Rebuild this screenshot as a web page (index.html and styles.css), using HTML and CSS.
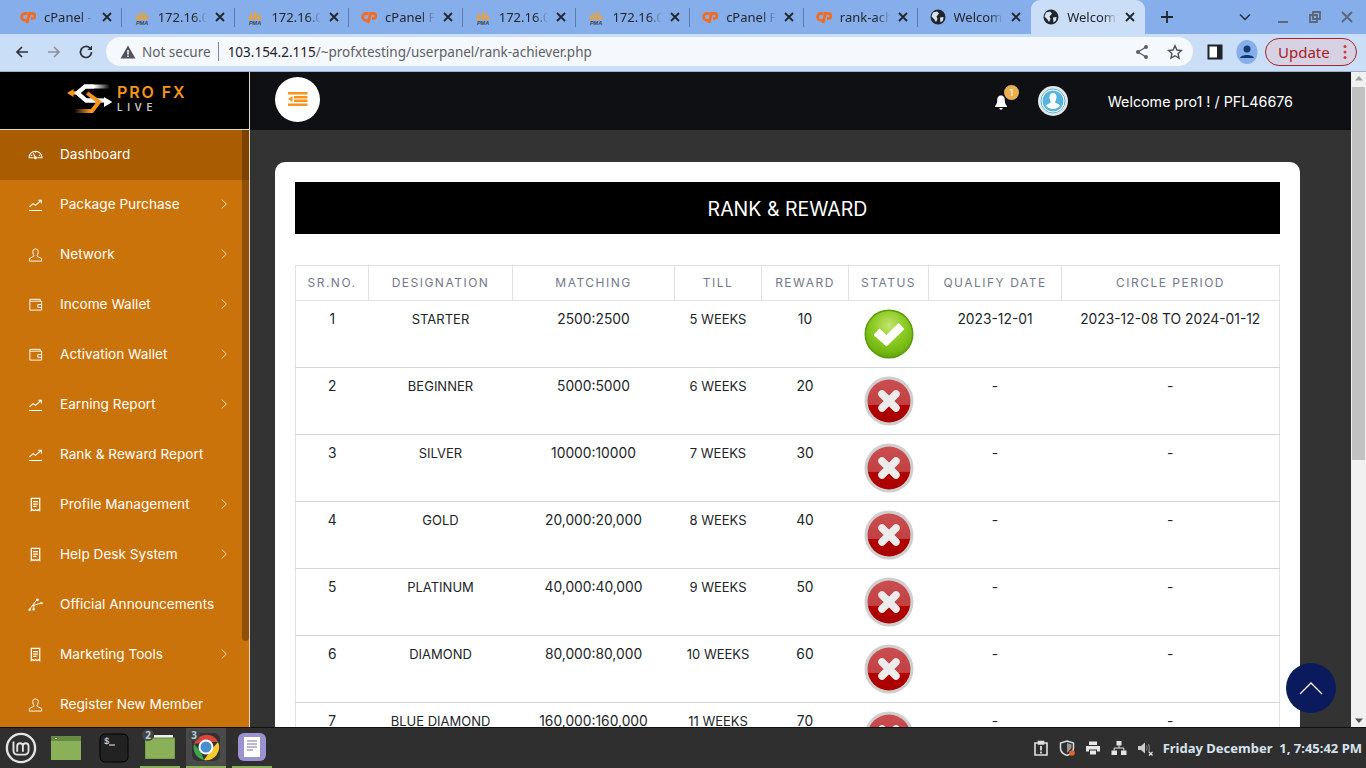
FILE: index.html
```html
<!DOCTYPE html>
<html lang="en">
<head>
<meta charset="utf-8">
<title>Rank &amp; Reward</title>
<link rel="stylesheet" href="styles.css">
</head>
<body>
<svg class="defs" width="0" height="0" aria-hidden="true">
  <defs>
    <radialGradient id="gGreen" cx="50%" cy="32%" r="68%"><stop offset="0" stop-color="#c4e56e"/><stop offset=".5" stop-color="#8ccb24"/><stop offset=".85" stop-color="#74b812"/><stop offset="1" stop-color="#62a80c"/></radialGradient>
    <linearGradient id="gRed" x1="0" y1="0" x2="0" y2="1"><stop offset="0" stop-color="#ca4e50"/><stop offset=".58" stop-color="#c24143"/><stop offset=".6" stop-color="#b30000"/><stop offset="1" stop-color="#a80000"/></linearGradient>
    <linearGradient id="fadeW" gradientUnits="userSpaceOnUse" x1="44" y1="0" x2="28" y2="0"><stop offset="0" stop-color="#fff" stop-opacity="0"/><stop offset="1" stop-color="#fff"/></linearGradient>
    <linearGradient id="fadeO" gradientUnits="userSpaceOnUse" x1="8" y1="0" x2="24" y2="0"><stop offset="0" stop-color="#f7941d" stop-opacity="0"/><stop offset="1" stop-color="#f7941d"/></linearGradient>
    <symbol id="ok" viewBox="0 0 50 50">
      <circle cx="25" cy="25" r="24.500" fill="#5b9a0c"/>
      <circle cx="25" cy="25" r="23" fill="url(#gGreen)"/>
      <path d="M10.500 26 L15.500 20.500 L22.500 27 L34.500 15 L39.500 20 L22.500 36.500 Z" fill="#fff" stroke="#fff" stroke-width="1.500" stroke-linejoin="round"/>
    </symbol>
    <symbol id="no" viewBox="0 0 50 50">
      <circle cx="25" cy="25" r="24.500" fill="#cfcfcf"/>
      <circle cx="25" cy="25" r="21.500" fill="url(#gRed)"/>
      <path d="M18 18 L32 32 M32 18 L18 32" stroke="#ececec" stroke-width="7.500" stroke-linecap="round"/>
    </symbol>
    <symbol id="cp" viewBox="0 0 16 16">
      <path d="M7.500 4.500H5a3.400 3.400 0 0 0 0 6.800H7M7 14 9.500 4.500h3a2.500 2.500 0 0 1 0 5H11" fill="none" stroke="#f26b21" stroke-width="2.800"/>
    </symbol>
    <symbol id="pma" viewBox="0 0 16 16">
      <path d="M1 10.500 5 3 5.500 10.500ZM6 10.500 8.500 0.500 10 10.500ZM10.500 10.500 10.500 3 15 10.500Z" fill="#f0a030"/>
      <text x="8" y="15.500" class="pma-t" text-anchor="middle">PMA</text>
    </symbol>
    <symbol id="globe" viewBox="0 0 16 16">
      <circle cx="8" cy="8" r="7.500" fill="#22262c"/>
      <path d="M3 3.500 7 2.500 9 4.500 6.500 7.500 7.500 10 6 13 4 10 1.500 7.500ZM10 8.500 13.500 8 13 11.500 10.500 13.500Z" fill="#d6e4f8"/>
    </symbol>
    <symbol id="tabx" viewBox="0 0 10 10"><path d="M1 1 9 9M9 1 1 9" stroke="#22262c" stroke-width="1.800"/></symbol>
    <symbol id="chev" viewBox="0 0 6 10"><path d="M.7 .5 5.300 5 .7 9.500" fill="none" stroke="#f2d9b4" stroke-width="1"/></symbol>
    <symbol id="i-gauge" viewBox="0 0 16 16"><path d="M1 11.500a7 7 0 0 1 14 0H10M6 11.500H1M8 11.500 5.500 6.500M3 8.500 4.500 9.500M13 8.500 11.500 9.500M8 4.500V6" fill="none" stroke="#fff" stroke-width="1.100"/><circle cx="8" cy="11.500" r="1.600" fill="#fff"/></symbol>
    <symbol id="i-chart" viewBox="0 0 16 16"><path d="M1 14.500H15M1.500 10.500 5.500 7 8 9 13.500 4M11 3.500H14.300V6.800" fill="none" stroke="#fff" stroke-width="1.100"/></symbol>
    <symbol id="i-user" viewBox="0 0 16 16"><path d="M5 5a3 3 0 1 1 6 0c0 2-1 3.500-1.500 4.500 0 1 3.500 1.500 5 3v2.500H1.500V12.500c1.500-1.500 5-2 5-3C6 8.500 5 7 5 5Z" fill="none" stroke="#fff" stroke-width="1"/></symbol>
    <symbol id="i-wallet" viewBox="0 0 16 16"><path d="M2 4.500V14H14.500V4.500H2V2.500H13V4.500M14.500 8H10.500V11H14.500" fill="none" stroke="#fff" stroke-width="1"/></symbol>
    <symbol id="i-doc" viewBox="0 0 16 16"><path d="M3.500 1.500H12.500V14.500L11 13.500 9.500 14.500 8 13.500 6.500 14.500 5 13.500 3.500 14.500ZM5.500 5H10.500M5.500 7.500H10.500M5.500 10H9" fill="none" stroke="#fff" stroke-width="1.300"/></symbol>
    <symbol id="i-vec" viewBox="0 0 16 16"><path d="M1.500 13.500 9 3.500M4 9.500 14 6.500M6.500 8 6 12" fill="none" stroke="#fff" stroke-width="1"/><circle cx="10" cy="3" r="1.500" fill="#fff"/><circle cx="14.500" cy="6.500" r="1.300" fill="#fff"/><circle cx="6" cy="13" r="1.300" fill="#fff"/><circle cx="1.800" cy="13.500" r="1.300" fill="#fff"/></symbol>
  </defs>
</svg>

<div class="tabstrip">
  <div class="tab"><svg class="fav"><use href="#cp"/></svg><span class="tab-title">cPanel - Tools</span><svg class="tab-x"><use href="#tabx"/></svg></div>
  <div class="tab"><svg class="fav"><use href="#pma"/></svg><span class="tab-title">172.16.0.10</span><svg class="tab-x"><use href="#tabx"/></svg></div>
  <div class="tab"><svg class="fav"><use href="#pma"/></svg><span class="tab-title">172.16.0.10</span><svg class="tab-x"><use href="#tabx"/></svg></div>
  <div class="tab"><svg class="fav"><use href="#cp"/></svg><span class="tab-title">cPanel File</span><svg class="tab-x"><use href="#tabx"/></svg></div>
  <div class="tab"><svg class="fav"><use href="#pma"/></svg><span class="tab-title">172.16.0.10</span><svg class="tab-x"><use href="#tabx"/></svg></div>
  <div class="tab"><svg class="fav"><use href="#pma"/></svg><span class="tab-title">172.16.0.10</span><svg class="tab-x"><use href="#tabx"/></svg></div>
  <div class="tab"><svg class="fav"><use href="#cp"/></svg><span class="tab-title">cPanel File</span><svg class="tab-x"><use href="#tabx"/></svg></div>
  <div class="tab"><svg class="fav"><use href="#cp"/></svg><span class="tab-title">rank-achiever</span><svg class="tab-x"><use href="#tabx"/></svg></div>
  <div class="tab tab-last"><svg class="fav"><use href="#globe"/></svg><span class="tab-title">Welcome</span><svg class="tab-x"><use href="#tabx"/></svg></div>
  <div class="tab tab-active"><svg class="fav"><use href="#globe"/></svg><span class="tab-title">Welcome</span><svg class="tab-x"><use href="#tabx"/></svg></div>
  <svg class="newtab" viewBox="0 0 14 14"><path d="M7 1V13M1 7H13" stroke="#22262c" stroke-width="1.800"/></svg>
  <div class="winctl">
    <svg class="wc wc-first" viewBox="0 0 14 14"><path d="M2 4.500 7 9.500 12 4.500" fill="none" stroke="#22303f" stroke-width="1.500"/></svg>
    <svg class="wc" viewBox="0 0 14 14"><path d="M2 12H12" stroke="#5b6878" stroke-width="2"/></svg>
    <svg class="wc" viewBox="0 0 14 14"><path d="M5 2H12V9H5ZM2 5H9V12H2Z" fill="none" stroke="#5b6878" stroke-width="1.800"/></svg>
    <svg class="wc" viewBox="0 0 14 14"><path d="M2 2 12 12M12 2 2 12" stroke="#5b6878" stroke-width="1.800"/></svg>
  </div>
</div>

<div class="toolbar">
  <svg class="nav-ic" viewBox="0 0 16 16"><path d="M14 8H3M8 3 3 8 8 13" fill="none" stroke="#2c3036" stroke-width="1.700"/></svg>
  <svg class="nav-ic" viewBox="0 0 16 16"><path d="M2 8H13M8 3 13 8 8 13" fill="none" stroke="#8a919b" stroke-width="1.700"/></svg>
  <svg class="nav-ic" viewBox="0 0 16 16"><path d="M13.500 8a5.500 5.500 0 1 1-1.600-3.900" fill="none" stroke="#2c3036" stroke-width="1.700"/><path d="M14 1.500V6H9.500Z" fill="#2c3036"/></svg>
  <div class="omnibox">
    <svg class="warn" viewBox="0 0 16 16"><path d="M8 1.500 15.500 14.500H.5Z" fill="#50555c"/><path d="M8 6V10.500M8 11.500V13" stroke="#f5f8fd" stroke-width="1.500"/></svg>
    <span class="ns">Not secure</span>
    <span class="omni-sep"></span>
    <span class="url"><span class="host">103.154.2.115</span>/~profxtesting/userpanel/rank-achiever.php</span>
    <svg class="omni-ic omni-share" viewBox="0 0 16 16"><path d="M12 3 4 8 12 13" fill="none" stroke="#5b6068" stroke-width="1.300"/><circle cx="12" cy="3" r="2" fill="#5b6068"/><circle cx="4" cy="8" r="2" fill="#5b6068"/><circle cx="12" cy="13" r="2" fill="#5b6068"/></svg>
    <svg class="omni-ic" viewBox="0 0 16 16"><path d="M8 1.800 9.900 6 14.500 6.500 11.100 9.500 12 14 8 11.700 4 14 4.900 9.500 1.500 6.500 6.100 6Z" fill="none" stroke="#4d5259" stroke-width="1.400"/></svg>
  </div>
  <svg class="side-ic" viewBox="0 0 16 16"><path d="M1.500 1.500H14.500V14.500H1.500Z" fill="#fff" stroke="#1f232a" stroke-width="2"/><path d="M10 1.500H14.500V14.500H10Z" fill="#1f232a"/></svg>
  <svg class="prof" viewBox="0 0 22 24"><ellipse cx="11" cy="12" rx="10.500" ry="12" fill="#85aeea"/><circle cx="11" cy="9" r="3.500" fill="#123a70"/><path d="M4 18c1-4 13-4 14 0Z" fill="#123a70"/></svg>
  <div class="update"><span>Update</span><svg class="kebab" viewBox="0 0 4 16"><circle cx="2" cy="2.500" r="1.500" fill="#d63a32"/><circle cx="2" cy="8" r="1.500" fill="#d63a32"/><circle cx="2" cy="13.500" r="1.500" fill="#d63a32"/></svg></div>
</div>

<div class="viewport">
  <aside class="sidebar">
    <div class="brand">
      <svg class="brand-mark" viewBox="0 0 46 30">
        <path d="M1 9 7.500 5V13Z" fill="#f7941d"/>
        <path d="M6 9H15" stroke="#f7941d" stroke-width="3.500"/>
        <path d="M44 2.500H19L11.500 9 20 16.500H38" fill="none" stroke="url(#fadeW)" stroke-width="4"/>
        <path d="M28 2.500H19L11.500 9 20 16.500H38" fill="none" stroke="#fff" stroke-width="4"/>
        <path d="M38 13 46.500 18 38 23Z" fill="#fff"/>
        <path d="M21 9 33 18 26 27H8" fill="none" stroke="url(#fadeO)" stroke-width="4"/>
      </svg>
      <div class="brand-text"><div class="brand-name">PRO FX</div><div class="brand-sub">LIVE</div></div>
    </div>
    <nav class="menu">
      <a class="item active"><svg class="mi"><use href="#i-gauge"/></svg><span class="label">Dashboard</span></a>
      <a class="item"><svg class="mi"><use href="#i-chart"/></svg><span class="label">Package Purchase</span><svg class="chev"><use href="#chev"/></svg></a>
      <a class="item"><svg class="mi"><use href="#i-user"/></svg><span class="label">Network</span><svg class="chev"><use href="#chev"/></svg></a>
      <a class="item"><svg class="mi"><use href="#i-wallet"/></svg><span class="label">Income Wallet</span><svg class="chev"><use href="#chev"/></svg></a>
      <a class="item"><svg class="mi"><use href="#i-wallet"/></svg><span class="label">Activation Wallet</span><svg class="chev"><use href="#chev"/></svg></a>
      <a class="item"><svg class="mi"><use href="#i-chart"/></svg><span class="label">Earning Report</span><svg class="chev"><use href="#chev"/></svg></a>
      <a class="item"><svg class="mi"><use href="#i-chart"/></svg><span class="label">Rank &amp; Reward Report</span></a>
      <a class="item"><svg class="mi"><use href="#i-doc"/></svg><span class="label">Profile Management</span><svg class="chev"><use href="#chev"/></svg></a>
      <a class="item"><svg class="mi"><use href="#i-doc"/></svg><span class="label">Help Desk System</span><svg class="chev"><use href="#chev"/></svg></a>
      <a class="item"><svg class="mi"><use href="#i-vec"/></svg><span class="label">Official Announcements</span></a>
      <a class="item"><svg class="mi"><use href="#i-doc"/></svg><span class="label">Marketing Tools</span><svg class="chev"><use href="#chev"/></svg></a>
      <a class="item"><svg class="mi"><use href="#i-user"/></svg><span class="label">Register New Member</span></a>
    </nav>
    <div class="side-thumb"></div>
  </aside>

  <div class="main">
    <header class="topbar">
      <div class="burger"><svg viewBox="0 0 20 14"><path d="M0 1.200H19.500M6 5.300H19.500M6 8.700H19.500M0 12.800H19.500" stroke="#f7941d" stroke-width="2.400"/><path d="M4.500 4 0 7 4.500 10Z" fill="#f7941d"/></svg></div>
      <div class="top-right">
        <div class="bell"><svg viewBox="0 0 14 16"><path d="M7 1.500C4 1.500 3.200 4 3.200 6.500c0 3-1.200 4.500-2.200 5.500v1H13v-1c-1-1-2.200-2.500-2.200-5.500C10.800 4 10 1.500 7 1.500ZM5.300 14a1.700 1.700 0 0 0 3.400 0Z" fill="#fff"/></svg><span class="badge">1</span></div>
        <svg class="avatar" viewBox="0 0 30 30"><circle cx="15" cy="15" r="15" fill="#e6e6e6"/><circle cx="15" cy="15" r="12" fill="#fff" stroke="#5ab6e0" stroke-width="1"/><circle cx="15" cy="15" r="10.500" fill="#56b4de"/><path d="M11.500 11c0-2.500 1.500-4 3.500-4s3.500 1.500 3.500 4-1 4-1.500 5c0 1 3 1.500 5 3.500-1.500 2-4 3.500-7 3.500s-5.500-1.500-7-3.500c2-2 5-2.500 5-3.500-.5-1-1.500-2.500-1.500-5Z" fill="#fff"/></svg>
        <div class="welcome">Welcome pro1 ! / PFL46676</div>
      </div>
    </header>
    <div class="content">
      <section class="card">
        <h1 class="card-title">RANK &amp; REWARD</h1>
        <table class="rank">
          <colgroup><col class="c1"><col class="c2"><col class="c3"><col class="c4"><col class="c5"><col class="c6"><col class="c7"><col class="c8"></colgroup>
          <thead>
            <tr><th>SR.NO.</th><th>DESIGNATION</th><th>MATCHING</th><th>TILL</th><th>REWARD</th><th>STATUS</th><th>QUALIFY DATE</th><th>CIRCLE PERIOD</th></tr>
          </thead>
          <tbody>
            <tr><td>1</td><td>STARTER</td><td>2500:2500</td><td>5 WEEKS</td><td>10</td><td><svg class="st"><use href="#ok"/></svg></td><td>2023-12-01</td><td>2023-12-08 TO 2024-01-12</td></tr>
            <tr><td>2</td><td>BEGINNER</td><td>5000:5000</td><td>6 WEEKS</td><td>20</td><td><svg class="st"><use href="#no"/></svg></td><td>-</td><td>-</td></tr>
            <tr><td>3</td><td>SILVER</td><td>10000:10000</td><td>7 WEEKS</td><td>30</td><td><svg class="st"><use href="#no"/></svg></td><td>-</td><td>-</td></tr>
            <tr><td>4</td><td>GOLD</td><td>20,000:20,000</td><td>8 WEEKS</td><td>40</td><td><svg class="st"><use href="#no"/></svg></td><td>-</td><td>-</td></tr>
            <tr><td>5</td><td>PLATINUM</td><td>40,000:40,000</td><td>9 WEEKS</td><td>50</td><td><svg class="st"><use href="#no"/></svg></td><td>-</td><td>-</td></tr>
            <tr><td>6</td><td>DIAMOND</td><td>80,000:80,000</td><td>10 WEEKS</td><td>60</td><td><svg class="st"><use href="#no"/></svg></td><td>-</td><td>-</td></tr>
            <tr><td>7</td><td>BLUE DIAMOND</td><td>160,000:160,000</td><td>11 WEEKS</td><td>70</td><td><svg class="st"><use href="#no"/></svg></td><td>-</td><td>-</td></tr>
          </tbody>
        </table>
      </section>
    </div>
    <div class="totop"><svg viewBox="0 0 24 14"><path d="M1 13 12 2 23 13" fill="none" stroke="#fff" stroke-width="1.300"/></svg></div>
  </div>

  <div class="pagebar">
    <svg class="pb-arrow" viewBox="0 0 10 6"><path d="M1 5.500 5 1 9 5.500Z" fill="#a3a3a3"/></svg>
    <div class="pb-thumb"></div>
    <svg class="pb-arrow pb-down" viewBox="0 0 10 6"><path d="M1 .5 5 5 9 .5Z" fill="#505050"/></svg>
  </div>
</div>

<footer class="taskbar">
  <svg class="mint" viewBox="0 0 34 34"><circle cx="17" cy="17" r="15" fill="none" stroke="#e4e4e4" stroke-width="2.500"/><path d="M9 10V20a4 4 0 0 0 4 4H21a4 4 0 0 0 4-4V15a3 3 0 0 0-6 0V21M13 21V15a3 3 0 0 1 6 0" fill="none" stroke="#e4e4e4" stroke-width="2"/></svg>
  <div class="launcher">
    <div class="lc"><svg class="app-ic app-first" viewBox="0 0 30 24"><path d="M0 0H30V24H0Z" fill="#8bb158"/><path d="M0 0H30V5H0Z" fill="#668a43"/><path d="M4 2H6V3H4Z" fill="#fff"/></svg></div>
    <div class="lc"><svg class="app-ic app-tall" viewBox="0 0 30 30"><rect x="1" y="1" width="28" height="28" rx="5" fill="#222" stroke="#000"/><text x="5" y="11" class="term-t">$</text><path d="M10 12H16" stroke="#eee"/></svg></div>
    <div class="lc lc-on"><svg class="app-ic" viewBox="0 0 30 24"><path d="M9 0H28V4H9Z" fill="#eee"/><path d="M0 3H30V24H0Z" fill="#8bb158" stroke="#668a43"/></svg><span class="count">2</span></div>
    <div class="lc lc-on lc-cur"><svg class="app-ic app-tall" viewBox="0 0 30 30"><rect x="1" y="1" width="28" height="28" rx="6" fill="#333"/><path d="M3 12A13 13 0 0 1 27 10H15Z" fill="#d9473b"/><path d="M27 10A13 13 0 0 1 13 28L20 18Z" fill="#f6c92b"/><path d="M13 28A13 13 0 0 1 3 12L10 20Z" fill="#3fa34d"/><circle cx="15" cy="15" r="6.500" fill="#4a8ed0" stroke="#fff" stroke-width="2"/></svg><span class="count">3</span></div>
    <div class="lc lc-on"><svg class="app-ic app-tall" viewBox="0 0 30 30"><rect x="1" y="1" width="28" height="28" rx="6" fill="#9a93cf"/><path d="M7 5H23V25H7Z" fill="#fff"/><path d="M10 9H20M10 12H20M10 15H20M10 18H16" stroke="#76759c"/></svg></div>
  </div>
  <div class="tray">
    <svg class="tr" viewBox="0 0 16 16"><path d="M2 3H14V15H2ZM5.500 1.500H10.500V4H5.500Z" fill="none" stroke="#e0e0e0" stroke-width="1.600"/><path d="M8 6V10.500M8 11.500V13.500" stroke="#e0e0e0" stroke-width="1.800"/></svg>
    <svg class="tr" viewBox="0 0 16 16"><path d="M8 1 14.500 3V8C14.500 12 11 14.500 8 15.500 5 14.500 1.500 12 1.500 8V3Z" fill="none" stroke="#ddd" stroke-width="1.500"/><path d="M8 3 12.500 4.500V8L8 13Z" fill="#999"/><circle cx="13" cy="13" r="2.800" fill="#e0662c"/></svg>
    <svg class="tr" viewBox="0 0 16 16"><path d="M4 1.500H12V5H4ZM1 6H15V11.500H12V9.500H4V11.500H1ZM5 10.500H11V14.500H5Z" fill="#e6e6e6"/></svg>
    <svg class="tr" viewBox="0 0 16 16"><path d="M5.500 1H10.500V5.500H5.500ZM.5 10.500H6V15H.5ZM10 10.500H15.500V15H10Z" fill="#e6e6e6"/><path d="M8 5.500V8M3.200 10.500V8H12.800V10.500" fill="none" stroke="#e6e6e6"/></svg>
    <svg class="tr" viewBox="0 0 16 16"><path d="M1 6H4L8 2.500V13.500L4 10H1Z" fill="#ccc"/><path d="M9.500 5.500Q11 8 9.500 10.500M11.500 4Q13.500 8 11.500 12" fill="none" stroke="#777" stroke-width="1.200"/><path d="M12 12 15.500 15.500M15.500 12 12 15.500" stroke="#e6e6e6" stroke-width="1.200"/></svg>
    <span class="clock">Friday December&nbsp; 1, 7:45:42 PM</span>
  </div>
</footer>
</body>
</html>
```

FILE: styles.css
```css
* { box-sizing: border-box; }
html, body { margin: 0; padding: 0; height: 100%; overflow: hidden; }
body {
  width: 1366px; height: 768px;
  display: flex; flex-direction: column;
  font-family: "Inter", "Liberation Sans", sans-serif;
  background: #333;
}
.defs { display: block; width: 0; height: 0; overflow: hidden; flex: none; }
.pma-t { font: italic bold 5.500px "Liberation Sans", sans-serif; fill: #444; }
.term-t { font: 9px "Liberation Mono", monospace; fill: #eee; }

/* browser tabs */
.tabstrip {
  height: 34px; flex: none; background: #85aeea;
  display: flex; align-items: center; padding-left: 8px;
  font-family: "Noto Sans", "Open Sans", sans-serif; font-size: 13px; color: #22262c;
}
.tab {
  width: 113.7px; height: 34px; flex: none;
  display: flex; align-items: center; padding-left: 12px;
}
.tab::after { content: ""; width: 1px; height: 19px; background: #5d7ba6; margin-left: 9px; flex: none; }
.tab-last::after, .tab-active::after { background: transparent; }
.tab-active { background: #cbdef8; border-radius: 9px 9px 0 0; }
.fav { width: 16px; height: 16px; flex: none; }
.tab-title {
  flex: 1; min-width: 0; margin-left: 8px; white-space: nowrap; overflow: hidden;
  -webkit-mask-image: linear-gradient(90deg, #000 72%, transparent);
  mask-image: linear-gradient(90deg, #000 72%, transparent);
}
.tab-x { width: 10px; height: 10px; flex: none; margin-left: 8px; }
.newtab { width: 14px; height: 14px; margin-left: 15px; flex: none; }
.winctl { margin-left: auto; display: flex; align-items: center; gap: 18px; padding-right: 12px; }
.wc { width: 14px; height: 14px; }
.wc-first { margin-right: 6px; }

/* address bar */
.toolbar {
  height: 38px; flex: none; background: #cbdef8;
  display: flex; align-items: center; padding: 0 0 2px 14px;
  border-bottom: 1px solid #9db0c8;
  font-family: "Noto Sans", "Open Sans", sans-serif;
}
.nav-ic { width: 16px; height: 16px; flex: none; margin-right: 16px; }
.omnibox {
  width: 1087px; height: 29px; margin-left: -4px; border-radius: 15px; background: #f5f8fd;
  display: flex; align-items: center; padding: 0 10px 0 14px; font-size: 13.5px; flex: none;
}
.warn { width: 16px; height: 16px; flex: none; }
.ns { margin-left: 6px; color: #5d6167; }
.omni-sep { width: 1px; height: 19px; background: #7f858d; margin: 0 9px 0 7px; }
.url { color: #5d6167; }
.host { color: #1d2126; }
.omni-ic { width: 16px; height: 16px; flex: none; margin-left: 17px; }
.omni-share { margin-left: auto; }
.side-ic { width: 16px; height: 16px; flex: none; margin-left: 14px; }
.prof { width: 22px; height: 24px; flex: none; margin-left: 13px; }
.update {
  width: 92px; height: 28px; margin-left: 7px; flex: none; border: 1px solid #a8242a; border-radius: 14px;
  background: #d6d2e4; color: #a8201f; font-size: 15px;
  display: flex; align-items: center; justify-content: space-between; padding: 0 9px 0 12px;
}
.kebab { width: 4px; height: 16px; flex: none; }

/* page */
.viewport { flex: 1; min-height: 0; display: flex; }
.sidebar {
  width: 250px; flex: none; background: #cb730b; border-right: 1px solid #e3d7c6;
  position: relative; overflow: hidden; color: #fff;
}
.brand {
  height: 58px; background: #000; border-bottom: 1px solid #d9d9d9;
  display: flex; align-items: flex-start; padding: 12px 0 0 66px; gap: 5px;
}
.brand-mark { width: 46px; height: 30px; flex: none; }
.brand-text { padding-top: 1px; }
.brand-name { font-size: 16px; line-height: 15px; font-weight: 600; color: #f7941d; letter-spacing: 1.9px; white-space: nowrap; }
.brand-sub { font-size: 10px; line-height: 10px; margin-top: 2px; font-weight: 600; color: #c9c9c9; letter-spacing: 4.6px; }
.item {
  height: 50px; display: flex; align-items: center; padding: 0 22px 2px 28px;
  font-size: 13.6px; letter-spacing: .02px; color: #fff;
}
.item.active { background: #aa5c00; }
.mi { width: 15px; height: 15px; flex: none; }
.label { margin-left: 17px; white-space: nowrap; }
.chev { width: 6px; height: 10px; margin-left: auto; flex: none; }
.side-thumb {
  position: absolute; top: 58px; left: 242px; width: 7px; height: 511px;
  background: rgba(60, 30, 0, .42); border-radius: 0 0 4px 4px;
}

.main { flex: 1; min-width: 0; display: flex; flex-direction: column; position: relative; overflow: hidden; }
.topbar {
  height: 58px; flex: none; background: #0f1014; color: #fff;
  display: flex; align-items: center; padding: 0 58px 0 25px;
}
.burger {
  width: 45px; height: 45px; border-radius: 50%; background: #fff; margin-top: -4px;
  display: flex; align-items: center; justify-content: center;
}
.burger svg { width: 20px; height: 14px; }
.top-right { margin-left: auto; display: flex; align-items: center; }
.bell { width: 14px; height: 16px; position: relative; margin: 2px 30px 0 0; }
.bell svg { width: 14px; height: 16px; display: block; }
.badge {
  position: absolute; left: 10px; top: -9px; width: 15px; height: 15px; border-radius: 50%;
  background: #e8b04f; color: #fff; font-size: 9px; line-height: 15px; text-align: center;
}
.avatar { width: 30px; height: 30px; margin-right: 40px; flex: none; }
.welcome { font-size: 14.3px; white-space: nowrap; margin-top: 1px; }

.content { flex: 1; min-height: 0; padding: 32px 51px 0 25px; }
.card { background: #fff; border-radius: 10px 10px 0 0; height: 100%; padding: 20px; overflow: hidden; }
.card-title {
  margin: 0; height: 52px; padding-top: 1px; background: #000; color: #fff; font-size: 19.500px; font-weight: 400;
  display: flex; align-items: center; justify-content: center;
}
.rank {
  margin-top: 31px; width: 984px; table-layout: fixed; border-collapse: collapse;
  font-size: 13.800px; color: #212529; text-align: center;
}
.c1 { width: 73px; } .c2 { width: 144px; } .c3 { width: 162px; } .c4 { width: 87px; }
.c5 { width: 87px; } .c6 { width: 80px; } .c7 { width: 133px; } .c8 { width: 218px; }
.rank th {
  height: 35px; padding: 0 0 2px; border: 1px solid #e0e1e6; font-size: 12px; font-weight: 400;
  letter-spacing: 1.5px; color: #74788d; white-space: nowrap;
}
.rank td {
  height: 67px; padding: 9px 0 0; vertical-align: top; line-height: 18px; white-space: nowrap;
  border-top: 1px solid #d4d4d6; border-bottom: 1px solid #d4d4d6;
}
.rank td:first-child { border-left: 1px solid #e0e1e6; }
.rank td:last-child { border-right: 1px solid #e0e1e6; }
.rank td:nth-child(2), .rank td:nth-child(4) { font-size: 13px; }
.st { width: 50px; height: 50px; display: block; margin: -1px auto 0; }
.totop {
  position: absolute; left: 1036px; top: 591px; width: 50px; height: 50px; border-radius: 50%;
  background: #0a1a5c; display: flex; align-items: center; justify-content: center;
}
.totop svg { width: 24px; height: 14px; }

.pagebar { width: 15px; flex: none; background: #f1f1f1; display: flex; flex-direction: column; align-items: center; padding: 3px 0; }
.pb-arrow { width: 10px; height: 6px; flex: none; }
.pb-thumb { width: 13px; height: 373px; background: #c1c1c1; margin-top: 6px; }
.pb-down { margin-top: auto; }

/* desktop panel */
.taskbar {
  height: 41px; flex: none; background: #2f2f2f; border-top: 1px solid #111;
  display: flex; align-items: center; padding-left: 5px; color: #d5e3ee;
}
.mint { width: 32px; height: 32px; flex: none; }
.launcher { display: flex; margin-left: 11px; height: 40px; gap: 6px; }
.lc { width: 40px; height: 40px; display: flex; align-items: center; justify-content: center; position: relative; }
.lc-on { border-bottom: 2px solid #87b158; }
.lc-cur { background: #4a4a4a; }
.app-ic { width: 30px; height: 24px; }
.app-first { margin-right: 4px; }
.app-tall { height: 30px; }
.count {
  position: absolute; left: 2px; top: 1px; width: 12px; height: 12px; border-radius: 50%;
  background: #444; color: #bcd; font-size: 10px; line-height: 12px; text-align: center;
  font-family: "Noto Sans", sans-serif; font-weight: 700;
}
.tray { margin-left: auto; display: flex; align-items: center; gap: 10px; padding-right: 4px; }
.tr { width: 16px; height: 16px; flex: none; }
.clock { font-family: "Noto Sans", sans-serif; font-weight: 700; font-size: 13px; white-space: nowrap; }
```
